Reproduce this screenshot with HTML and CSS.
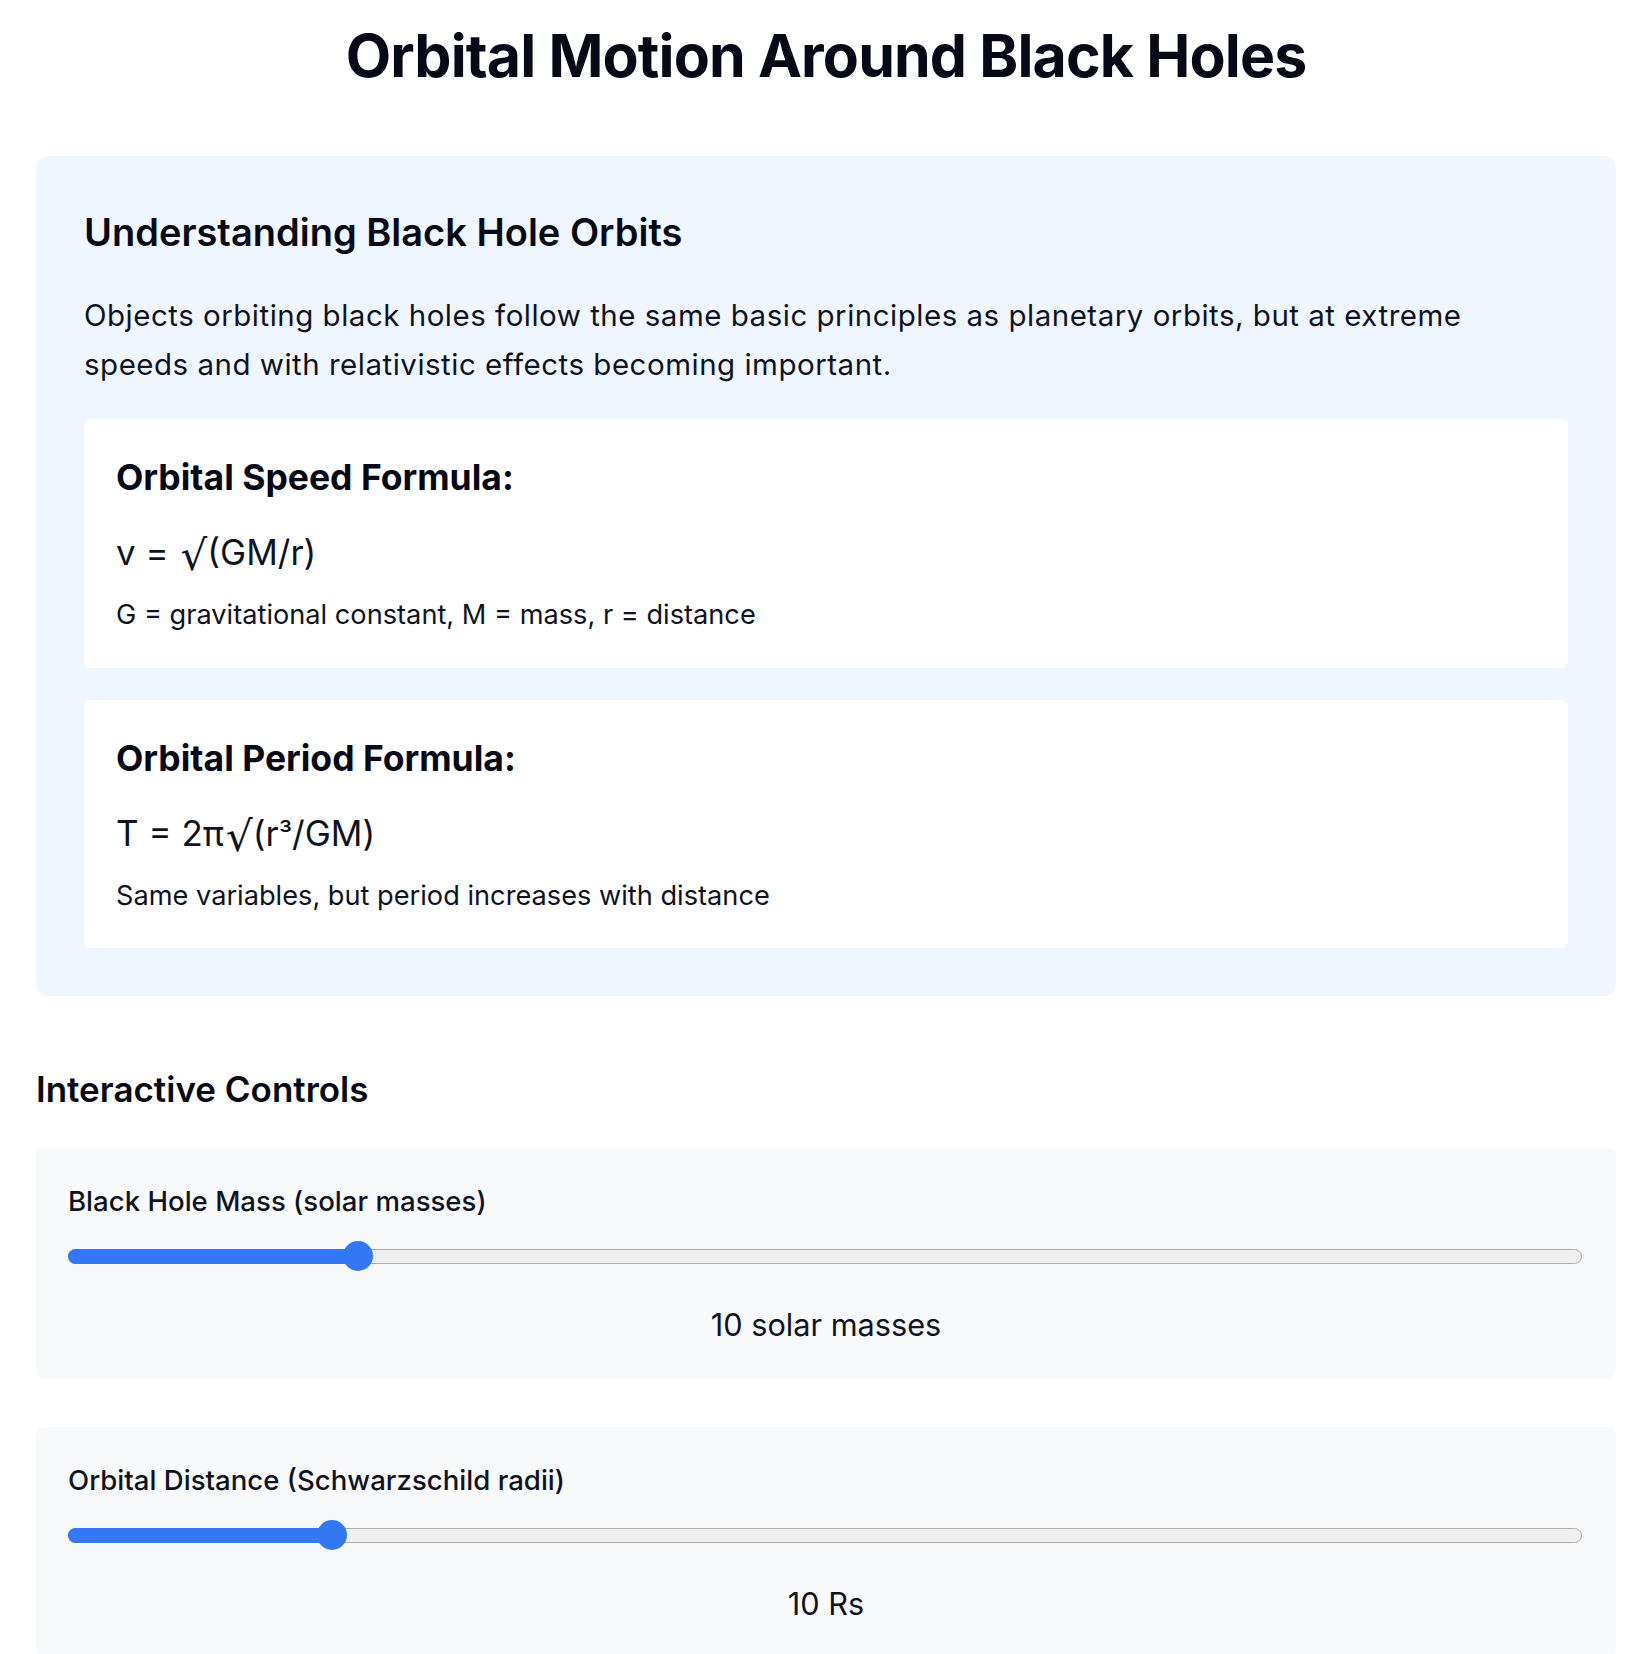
FILE: index.html
```html
<!DOCTYPE html>
<html lang="en">
<head>
<meta charset="utf-8">
<title>Orbital Motion Around Black Holes</title>
<link rel="stylesheet" href="styles.css">
</head>
<body>
<main class="page">
  <h1 class="title">Orbital Motion Around Black Holes</h1>

  <section class="explain">
    <h2 class="explain-title">Understanding Black Hole Orbits</h2>
    <p class="explain-text">Objects orbiting black holes follow the same basic principles as planetary orbits, but at extreme speeds and with relativistic effects becoming important.</p>

    <div class="formula-card">
      <h3 class="formula-title">Orbital Speed Formula:</h3>
      <div class="formula">v = <span class="radical">√</span>(GM/r)</div>
      <p class="formula-note">G = gravitational constant, M = mass, r = distance</p>
    </div>

    <div class="formula-card">
      <h3 class="formula-title">Orbital Period Formula:</h3>
      <div class="formula">T = 2π<span class="radical">√</span>(r<span class="sup">³</span>/GM)</div>
      <p class="formula-note">Same variables, but period increases with distance</p>
    </div>
  </section>

  <section class="controls">
    <h2 class="controls-title">Interactive Controls</h2>

    <div class="control">
      <label class="control-label">Black Hole Mass (solar masses)</label>
      <div class="slider" style="--f: 0.1837">
        <div class="track"></div>
        <div class="fill"></div>
        <div class="thumb"></div>
      </div>
      <div class="control-value">10 solar masses</div>
    </div>

    <div class="control">
      <label class="control-label">Orbital Distance (Schwarzschild radii)</label>
      <div class="slider" style="--f: 0.1667">
        <div class="track"></div>
        <div class="fill"></div>
        <div class="thumb"></div>
      </div>
      <div class="control-value">10 Rs</div>
    </div>
  </section>
</main>
</body>
</html>
```

FILE: styles.css
```css
* {
  box-sizing: border-box;
}

html, body {
  margin: 0;
  padding: 0;
  background: #ffffff;
}

body {
  font-family: Inter, "Noto Sans", "Liberation Sans", sans-serif;
  color: #0b0e1a;
  line-height: 1.5;
}

.page {
  padding: 20px 36px 40px;
}

.title {
  margin: 0 0 64px;
  font-size: 59px;
  line-height: 72px;
  font-weight: 700;
  text-align: center;
  color: #070a16;
  letter-spacing: -0.87px;
}

.explain {
  background: #eff6ff;
  border-radius: 12px;
  padding: 48px;
}

.explain-title {
  margin: 0 0 30px;
  font-size: 38px;
  line-height: 57px;
  font-weight: 600;
  color: #070a16;
}

.explain-text {
  margin: 0 0 30px;
  max-width: 1440px;
  font-size: 29.5px;
  letter-spacing: 0.5px;
  line-height: 49px;
  color: #10131f;
}

.formula-card {
  background: #ffffff;
  border-radius: 8px;
  padding: 32px;
}

.formula-card + .formula-card {
  margin-top: 32px;
}

.formula-title {
  margin: 0 0 22px;
  font-size: 35.5px;
  line-height: 54px;
  font-weight: 700;
  color: #070a16;
}

.formula {
  font-size: 35px;
  line-height: 51px;
  height: 51px;
  margin: 0 0 17px;
  color: #10131f;
}

.radical {
  font-family: "DejaVu Sans", "Liberation Sans", sans-serif;
  font-size: 42px;
  line-height: 1;
  vertical-align: -5px;
  margin: 0 0 0 2px;
}

.sup {
  font-size: 30px;
}

.formula-note {
  margin: 0;
  font-size: 27.2px;
  line-height: 40.5px;
  color: #10131f;
}

.controls {
  margin-top: 66px;
}

.controls-title {
  margin: 0 0 32px;
  font-size: 35px;
  line-height: 54px;
  font-weight: 600;
  color: #070a16;
}

.control {
  background: #f8f9fb;
  border-radius: 8px;
  padding: 32px;
  display: flex;
  flex-direction: column;
}

.control + .control {
  margin-top: 48px;
}

.control-label {
  font-size: 27.6px;
  line-height: 42px;
  font-weight: 500;
  color: #10131f;
}

.slider {
  position: relative;
  height: 30px;
  margin-top: 19px;
  margin-right: 2px;
}

.track {
  position: absolute;
  left: 0;
  right: 0;
  top: 7.5px;
  height: 15px;
  border: 1.5px solid #acacac;
  background: #efefef;
  border-radius: 8px;
}

.fill {
  position: absolute;
  left: 0;
  top: 7.5px;
  height: 15px;
  width: calc(15px + var(--f) * (100% - 30px));
  background: #3478f6;
  border-radius: 8px 0 0 8px;
}

.thumb {
  position: absolute;
  top: 0;
  width: 30px;
  height: 30px;
  border-radius: 50%;
  background: #3478f6;
  left: calc(2px + var(--f) * (100% - 30px));
}

.control-value {
  margin-top: 31px;
  font-size: 30.7px;
  line-height: 45px;
  text-align: center;
  color: #10131f;
}
```
